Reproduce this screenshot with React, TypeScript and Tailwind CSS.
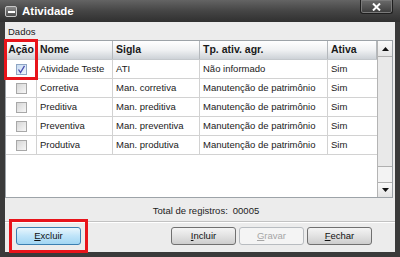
import React from 'react';

const cols = [
  { label: 'Ação', w: 'w-[31px]', center: true },
  { label: 'Nome', w: 'w-[76px]' },
  { label: 'Sigla', w: 'w-[87px]' },
  { label: 'Tp. ativ. agr.', w: 'w-[128px]' },
  { label: 'Ativa', w: 'w-[49px]' },
];

const rows = [
  { checked: true, nome: 'Atividade Teste', sigla: 'ATI', tipo: 'Não informado', ativa: 'Sim' },
  { checked: false, nome: 'Corretiva', sigla: 'Man. corretiva', tipo: 'Manutenção de patrimônio', ativa: 'Sim' },
  { checked: false, nome: 'Preditiva', sigla: 'Man. preditiva', tipo: 'Manutenção de patrimônio', ativa: 'Sim' },
  { checked: false, nome: 'Preventiva', sigla: 'Man. preventiva', tipo: 'Manutenção de patrimônio', ativa: 'Sim' },
  { checked: false, nome: 'Produtiva', sigla: 'Man. produtiva', tipo: 'Manutenção de patrimônio', ativa: 'Sim' },
];

function Checkbox({ checked }: { checked: boolean }) {
  return (
    <div
      className={
        'w-[11px] h-[11px] border flex items-center justify-center ' +
        (checked
          ? 'border-[#8fa6c4] bg-linear-to-br from-[#c9dcf2] to-[#eef5fc]'
          : 'border-[#a8a8a8] bg-linear-to-br from-[#d6d6d6] to-[#f7f7f7]')
      }
    >
      {checked && (
        <svg width="9" height="9" viewBox="0 0 9 9">
          <path d="M1.5 4.5 L3.5 7.5 L7.5 0.8" fill="none" stroke="#4b4fb0" strokeWidth="1.3" />
        </svg>
      )}
    </div>
  );
}

function Btn({ label, hot, blue, disabled }: { label: string; hot: string; blue?: boolean; disabled?: boolean }) {
  const rest = label.slice(1);
  return (
    <button
      className={
        'w-[65px] h-[18px] rounded-[3px] border text-[9.5px] leading-none flex items-center justify-center ' +
        (blue
          ? 'border-[#3c7fb1] bg-linear-to-b from-[#e8f6fd] via-[#bfe4f9] to-[#a2d6f3] text-[#111]'
          : disabled
          ? 'border-[#b8bcc0] bg-[#f4f4f4] text-[#a6a6a6]'
          : 'border-[#707070] bg-linear-to-b from-[#f4f4f4] via-[#e2e2e2] to-[#cdcdcd] text-[#111]')
      }
    >
      <span className="underline underline-offset-1">{hot}</span>
      {rest}
    </button>
  );
}

export default function App() {
  return (
    <div className="w-[400px] h-[257px] bg-[#3a3a3a] flex flex-col relative overflow-hidden font-['Liberation_Sans',Arial,sans-serif]">
      {/* Title bar */}
      <div className="h-[22px] flex items-start bg-linear-to-b from-[#646464] via-[#454545] to-[#303030]">
        <div className="ml-[5px] mt-[6px] w-[12px] h-[11px] rounded-[2px] border border-[#c8c8c8] bg-linear-to-b from-[#8a8a8a] to-[#4e4e4e] flex items-center justify-center">
          <div className="w-[7px] h-[2px] bg-white" />
        </div>
        <div className="ml-[5px] mt-[4px] text-white font-bold text-[11.5px] leading-[14px]">Atividade</div>
        <div className="flex-1" />
        <div className="mr-[7px] w-[33px] h-[14px] rounded-b-[3px] border border-t-0 border-[#1e1e1e] bg-linear-to-b from-[#6c6c6c] to-[#3c3c3c] shadow-[inset_0_0_0_1px_#7a7a7a] flex items-center justify-center">
          <svg width="9" height="8" viewBox="0 0 9 8">
            <path d="M1 0.5 L8 7.5 M8 0.5 L1 7.5" stroke="white" strokeWidth="2" />
          </svg>
        </div>
      </div>

      {/* Client area */}
      <div className="mx-[5px] h-[230px] bg-[#ececec] flex flex-col text-[9.5px] text-[#1a1a1a]">
        <div className="h-[18px] flex items-center pl-[3px] pt-[3px]">Dados</div>

        <div className="h-[158px] mr-[2px] flex border border-[#9da3a8] bg-white">
          <div className="w-[371px] flex flex-col">
            <div className="h-[19px] flex border-b border-[#c4c8cc] bg-linear-to-b from-white via-[#f0f1f3] to-[#cdd2d7]">
              {cols.map((c) => (
                <div
                  key={c.label}
                  className={
                    c.w +
                    ' h-full border-r border-[#b4b8bc] flex items-center font-bold text-[10.5px] ' +
                    (c.center ? 'justify-center' : 'pl-[3px]')
                  }
                >
                  {c.label}
                </div>
              ))}
            </div>
            {rows.map((r) => (
              <div key={r.nome} className="h-[19px] flex border-b border-[#d2d2d2]">
                <div className="w-[31px] h-full border-r border-[#d2d2d2] flex items-center justify-center">
                  <Checkbox checked={r.checked} />
                </div>
                <div className="w-[76px] h-full border-r border-[#d2d2d2] flex items-center pl-[3px] whitespace-nowrap">{r.nome}</div>
                <div className="w-[87px] h-full border-r border-[#d2d2d2] flex items-center pl-[3px] whitespace-nowrap">{r.sigla}</div>
                <div className="w-[128px] h-full border-r border-[#d2d2d2] flex items-center pl-[3px] whitespace-nowrap">{r.tipo}</div>
                <div className="w-[49px] h-full flex items-center pl-[3px]">{r.ativa}</div>
              </div>
            ))}
          </div>

          {/* Scrollbar */}
          <div className="flex-1 flex flex-col border-l border-[#b4b4b4] bg-[#f3f3f3]">
            <div className="h-[16px] border-b border-[#b0b0b0] bg-linear-to-b from-[#fafafa] to-[#e4e4e4] flex items-center justify-center">
              <svg width="7" height="4" viewBox="0 0 7 4"><path d="M0 4 L3.5 0 L7 4 Z" fill="#111" /></svg>
            </div>
            <div className="h-[110px] border-b border-[#b0b0b0] bg-[#e9e9e9]" />
            <div className="flex-1" />
            <div className="h-[15px] border-t border-[#b0b0b0] bg-linear-to-b from-[#fafafa] to-[#e4e4e4] flex items-center justify-center">
              <svg width="7" height="4" viewBox="0 0 7 4"><path d="M0 0 L3.5 4 L7 0 Z" fill="#111" /></svg>
            </div>
          </div>
        </div>

        <div className="h-[23px] flex items-center justify-center pl-[12px] pt-[3px] text-[#222]">
          <span>Total de registros:</span>
          <span className="ml-[5px]">00005</span>
        </div>
        <div className="h-[2px] border-t border-[#c2c2c2] border-b border-b-white" />

        <div className="flex-1 flex items-start pt-[4px]">
          <div className="ml-[11px]">
            <Btn label="Excluir" hot="E" blue />
          </div>
          <div className="flex-1" />
          <div className="flex gap-[3px] mr-[23px]">
            <Btn label="Incluir" hot="I" />
            <Btn label="Gravar" hot="G" disabled />
            <Btn label="Fechar" hot="F" />
          </div>
        </div>
      </div>

      {/* Annotation highlights */}
      <div className="absolute left-[4px] top-[39px] w-[34px] h-[41px] border-[3px] border-[#e8141b]" />
      <div className="absolute left-[9px] top-[219px] w-[79px] h-[34px] border-[3px] border-[#e8141b]" />
    </div>
  );
}
